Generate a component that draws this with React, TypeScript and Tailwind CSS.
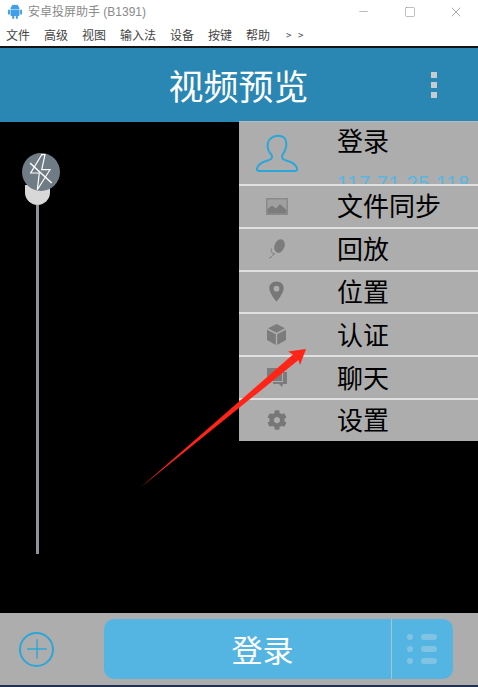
import { Minus, Square, X, Plus } from "lucide-react"
import { FaCog } from "react-icons/fa"
import { IoLocationSharp } from "react-icons/io5"

const menus = ["文件", "高级", "视图", "输入法", "设备", "按键", "帮助"]

const ImageIcon = () => (
  <svg width="22" height="17" viewBox="0 0 22 17">
    <rect width="22" height="17" fill="#8a8a8a" />
    <rect x="1.500" y="1.500" width="19" height="14" fill="#a0a0a0" />
    <path d="M1.500 15.500V11l4.500-3.500 4 3 4-4.500 6.500 6v3.500z" fill="#7c7c7c" />
  </svg>
)

const MicIcon = () => (
  <svg width="18" height="20" viewBox="0 0 18 20" fill="none">
    <ellipse cx="11.500" cy="7" rx="5" ry="7" transform="rotate(22 11.500 7)" fill="#7c7c7c" />
    <path d="M3.500 9.500c-1 3 .5 5 3.500 5.500M5.500 15c-.5 2-2.500 3.500-4.500 4" stroke="#7c7c7c" strokeWidth="1" />
  </svg>
)

const CubeIcon = () => (
  <svg width="19" height="21" viewBox="0 0 19 21" fill="#7c7c7c">
    <path d="M9.500 0L18 4.300 9.500 8.800 1 4.300z" />
    <path d="M0 5.700l8.800 4.600V21L0 16z" />
    <path d="M19 5.700l-8.800 4.600V21L19 16z" />
  </svg>
)

const ChatIcon = () => (
  <svg width="20" height="20" viewBox="0 0 20 20" fill="#7c7c7c">
    <path d="M0 0h15v13H0z" />
    <path d="M16 4h4v12h-4l-1 3-3-3H6v-2h10z" />
  </svg>
)

const rows = [
  { label: "文件同步", icon: <ImageIcon /> },
  { label: "回放", icon: <MicIcon /> },
  { label: "位置", icon: <IoLocationSharp size={23} /> },
  { label: "认证", icon: <CubeIcon /> },
  { label: "聊天", icon: <ChatIcon /> },
  { label: "设置", icon: <FaCog size={20} /> },
]

export default function App() {
  return (
    <div className="relative flex h-[687px] w-[478px] flex-col overflow-hidden bg-white font-['Noto_Sans_CJK_SC','Liberation_Sans',sans-serif]">
      {/* window title */}
      <div className="flex h-[23px] shrink-0 items-center pl-2">
        <svg width="14" height="15" viewBox="0 0 14 15" fill="#3f9fe8">
          <path d="M2.500 5a4.500 4.300 0 0 1 9 0z" />
          <path d="M4 .5l1.200 2M10 .5L8.800 2.500" stroke="#3f9fe8" strokeWidth=".8" />
          <path d="M2.500 5.600h9V11a1 1 0 0 1-1 1H3.500a1 1 0 0 1-1-1z" />
          <rect x="0" y="5.600" width="1.900" height="5" rx=".9" />
          <rect x="12.100" y="5.600" width="1.900" height="5" rx=".9" />
          <rect x="4.200" y="11" width="2" height="4" rx="1" />
          <rect x="7.800" y="11" width="2" height="4" rx="1" />
        </svg>
        <span className="ml-[6px] font-['Liberation_Sans','Noto_Sans_CJK_SC',sans-serif] text-xs text-[#8a8a8a]">安卓投屏助手 (B1391)</span>
        <div className="ml-auto flex items-center text-[#808080]">
          <Minus size={13} strokeWidth={1} className="mr-[34px]" />
          <Square size={12} strokeWidth={1} className="mr-[32px]" />
          <X size={16} strokeWidth={1} className="mr-[14px]" />
        </div>
      </div>
      <div className="flex h-[23px] shrink-0 items-center gap-[14px] pl-[6px] text-xs text-[#444]">
        {menus.map((m) => (
          <span key={m}>{m}</span>
        ))}
        <span className="ml-[2px] text-[10px] tracking-[2px]">&gt; &gt;</span>
      </div>
      <div className="h-[2px] shrink-0 bg-[#141414]" />

      {/* app header */}
      <div className="relative flex h-[74px] shrink-0 items-center justify-center bg-[#2a86b2] text-[35px] text-white">
        <span className="mr-[1px]">视频预览</span>
        <div className="absolute right-[41px] top-[24px] flex flex-col gap-[4px]">
          <div className="size-[6px] bg-[#c8ccce]" />
          <div className="size-[6px] bg-[#c8ccce]" />
          <div className="size-[6px] bg-[#c8ccce]" />
        </div>
      </div>

      {/* video area */}
      <div className="relative flex-1 bg-black">
        <div className="flex w-[75px] flex-col items-center pt-[31px]">
          <div className="z-10 ml-[6px] size-[38px] rounded-full bg-[#6f7c85]">
            <svg width="38" height="38" viewBox="0 0 38 38" fill="none" stroke="#fff" strokeWidth="1.200">
              <path d="M19.700 1.700L8.700 20h8.600l-2 16.700L28 16.700h-8.300L23 1.700z" />
              <path d="M8 10l21.700 20" strokeWidth="1.500" />
            </svg>
          </div>
          <div className="mt-[-6px] h-[20px] w-[25px] rounded-b-full rounded-t-[4px] bg-[#d8d8d8]" />
          <div className="h-[349px] w-[3px] bg-[#8d959b]" />
        </div>

        {/* dropdown menu */}
        <div className="absolute right-0 top-[-1px] flex w-[239px] flex-col bg-[#adadad]">
          <div className="flex h-[63px] overflow-hidden border-t border-[#b6bcc0]">
            <div className="flex w-[75px] shrink-0 items-center justify-center pt-[1px] pl-[1px]">
              <svg width="42" height="42" viewBox="0 0 42 42" fill="none" stroke="#2ba6da" strokeWidth="2">
                <path d="M16 4.500c3-2.500 9-2.500 12 0 3 2.600 3 8.500 1 13-1 2.300-2.800 3.600-3 6-.2 2 2 3.500 5 4.300 4 1.200 9 3 10 7.500.4 1.800-.5 2.700-2 2.700H3c-1.500 0-2.400-.9-2-2.700 1-4.500 6-6.300 10-7.500 3-.8 5.200-2.300 5-4.300-.2-2.400-2.500-3.500-3.500-6-1.500-4-1.500-10 3.500-13z" />
              </svg>
            </div>
            <div className="flex flex-col pl-[23px]">
              <span className="text-[26px] leading-[36px] text-black">登录</span>
              <span className="mt-[15px] whitespace-nowrap font-['Liberation_Sans',sans-serif] text-[20px] leading-[20px] tracking-[0.6px] text-[#56b7e3]">117.71.25.118</span>
            </div>
          </div>
          {rows.map((r) => (
            <div key={r.label} className="flex h-[42.8px] items-center border-t-2 border-[#e0e0e0] text-[26px] text-black">
              <div className="flex w-[75px] shrink-0 justify-center text-[#777]">{r.icon}</div>
              <span className="pb-[3px] pl-[23px]">{r.label}</span>
            </div>
          ))}
        </div>
      </div>

      {/* bottom bar */}
      <div className="flex h-[72px] shrink-0 items-center bg-[#adadad] pl-[19px]">
        <div className="flex size-[35px] items-center justify-center rounded-full border-2 border-[#2ba6da] text-[#2ba6da]">
          <Plus size={32} strokeWidth={1} className="shrink-0" />
        </div>
        <div className="ml-[50px] flex h-[60px] w-[349px] rounded-[10px] bg-[#55b5e2] text-white">
          <div className="flex w-[288px] items-center justify-center border-r border-[#a3c5d6] pl-[30px] text-[31px]">登录</div>
          <div className="flex flex-1 flex-col justify-center gap-[6px] pl-[15px]">
            {[0, 1, 2].map((i) => (
              <div key={i} className="flex items-center gap-[8px]">
                <div className="size-[6px] rounded-full bg-[#80c3e3]" />
                <div className="h-[6px] w-[16px] rounded-full bg-[#80c3e3]" />
              </div>
            ))}
          </div>
        </div>
      </div>
      <div className="h-[2px] shrink-0 bg-[#1f3350]" />

      {/* red annotation arrow */}
      <svg className="absolute inset-0" width="478" height="687" viewBox="0 0 478 687">
        <polygon points="140.500,487.500 293,354.500 288,351.500 306,349 300,365 298.500,360" fill="#ff2417" />
      </svg>
    </div>
  )
}
